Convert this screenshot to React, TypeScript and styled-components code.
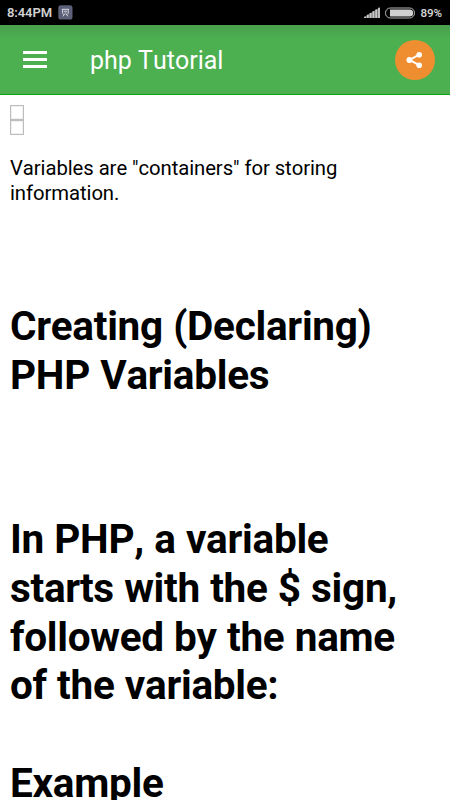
import React from "react";
import styled, { createGlobalStyle } from "styled-components";

const GlobalStyle = createGlobalStyle`
  * {
    box-sizing: border-box;
  }

  body {
    margin: 0;
    background: #ffffff;
    font-family: Roboto, sans-serif;
    font-kerning: none;
    overflow: hidden;
  }
`;

const Screen = styled.div`
  width: 450px;
  height: 800px;
  display: flex;
  flex-direction: column;
  overflow: hidden;
`;

const StatusBar = styled.div`
  height: 25px;
  flex: none;
  background: #000000;
  color: #d2d2d2;
  display: flex;
  align-items: center;
  justify-content: space-between;
  padding: 0 8px 0 7px;
`;

const StatusGroup = styled.div<{ $gap: number }>`
  display: flex;
  align-items: center;
  gap: ${(props) => props.$gap}px;
`;

const StatusText = styled.span<{ $size: number }>`
  font-size: ${(props) => props.$size}px;
  font-weight: 600;
  line-height: 26px;
  letter-spacing: -0.1px;
  white-space: nowrap;
`;

const Toolbar = styled.header`
  height: 70px;
  flex: none;
  background: linear-gradient(#48a04c, #4caf50 14px);
  border-bottom: 1px solid #0ba30e;
  display: flex;
  align-items: center;
  padding: 0 15px 0 23px;
`;

const MenuButton = styled.button`
  border: 0;
  padding: 0;
  width: 24px;
  height: 17px;
  background: none;
  display: flex;
  flex-direction: column;
  justify-content: space-between;
`;

const MenuLine = styled.span`
  width: 24px;
  height: 2.6px;
  background: #ffffff;
`;

const Title = styled.h1`
  flex: 1;
  margin: 0;
  padding: 2px 0 0 43px;
  color: #ffffff;
  font-size: 25px;
  font-weight: 400;
  line-height: 30px;
`;

const ShareButton = styled.button`
  width: 40px;
  height: 40px;
  border: 0;
  border-radius: 50%;
  padding: 0;
  background: #ef8e30;
  display: flex;
  align-items: center;
  justify-content: center;
`;

const Content = styled.main`
  padding: 10px;
`;

const Glyphs = styled.div`
  width: 14px;
  display: flex;
  flex-direction: column;
`;

const MissingGlyph = styled.span`
  height: 15px;
  border: 1px solid #bdbdbd;
  box-shadow: inset 0 0 0 1px #f0f0f0;
`;

const Paragraph = styled.p`
  margin: 21px 0 0;
  font-size: 20.3px;
  line-height: 25px;
  letter-spacing: -0.07px;
  color: #000000;
  white-space: nowrap;
`;

const Heading = styled.h2<{ $top: number }>`
  margin: ${(props) => props.$top}px 0 0;
  font-size: 40.5px;
  font-weight: 700;
  line-height: 48.75px;
  letter-spacing: -0.28px;
  word-spacing: 0.5px;
  color: #000000;
  white-space: nowrap;
`;

const NotificationIcon = () => (
  <svg width="15" height="15" viewBox="0 0 15 15" fill="none">
    <rect x="0.3" y="0.3" width="14.2" height="14.2" rx="2.6" fill="#5b6078" />
    <path
      d="M3.8 4.3h7.2M4.6 4.3v4l1.2 1.4M10.2 4.3v4L9 9.7M5.8 6.2h3.2M5 11.3l1.6-2.2M9.8 11.3L8.2 9.1M6.6 8h1.8"
      stroke="#d5d8e0"
      strokeWidth="1"
    />
  </svg>
);

const SignalIcon = () => (
  <svg width="16" height="12" viewBox="0 0 16 12">
    <path d="M0 11V10L16 0.3V11z" fill="#6f6f6f" />
    <path
      d="M1 11V9.8M3.8 11V7.8M6.6 11V6M9.4 11V4.3M12.2 11V2.6M15 11V0.8"
      stroke="#c8c8c8"
      strokeWidth="1.8"
    />
  </svg>
);

const BatteryIcon = () => (
  <svg width="30" height="12" viewBox="0 0 30 12">
    <rect x="0.5" y="1" width="29" height="10" rx="4.8" fill="none" stroke="#b5b5b5" />
    <path d="M5 2.4h19.6a3.6 3.6 0 0 1 0 7.2H5z" fill="#d0d0d0" />
  </svg>
);

const ShareIcon = () => (
  <svg width="18" height="18" viewBox="0 0 18 18" fill="#ffffff">
    <path d="M13.2 3.6L3.6 9l9.6 5.2" fill="none" stroke="#ffffff" strokeWidth="2" />
    <circle cx="13.2" cy="3.8" r="2.8" />
    <circle cx="3.4" cy="9" r="2.9" />
    <circle cx="13.2" cy="14.2" r="2.8" />
  </svg>
);

const App: React.FC = () => {
  return (
    <>
      <GlobalStyle />
      <Screen>
        <StatusBar>
          <StatusGroup $gap={6}>
            <StatusText $size={13}>8:44PM</StatusText>
            <NotificationIcon />
          </StatusGroup>
          <StatusGroup $gap={5}>
            <SignalIcon />
            <BatteryIcon />
            <StatusText $size={11.6}>89%</StatusText>
          </StatusGroup>
        </StatusBar>
        <Toolbar>
          <MenuButton aria-label="Menu">
            <MenuLine />
            <MenuLine />
            <MenuLine />
          </MenuButton>
          <Title>php Tutorial</Title>
          <ShareButton aria-label="Share">
            <ShareIcon />
          </ShareButton>
        </Toolbar>
        <Content>
          <Glyphs>
            <MissingGlyph />
            <MissingGlyph />
          </Glyphs>
          <Paragraph>
            Variables are "containers" for storing
            <br />
            information.
          </Paragraph>
          <Heading $top={96}>
            Creating (Declaring)
            <br />
            PHP Variables
          </Heading>
          <Heading $top={115.5}>
            In PHP, a variable
            <br />
            starts with the $ sign,
            <br />
            followed by the name
            <br />
            of the variable:
          </Heading>
          <Heading $top={48.75}>Example</Heading>
        </Content>
      </Screen>
    </>
  );
};

export default App;
